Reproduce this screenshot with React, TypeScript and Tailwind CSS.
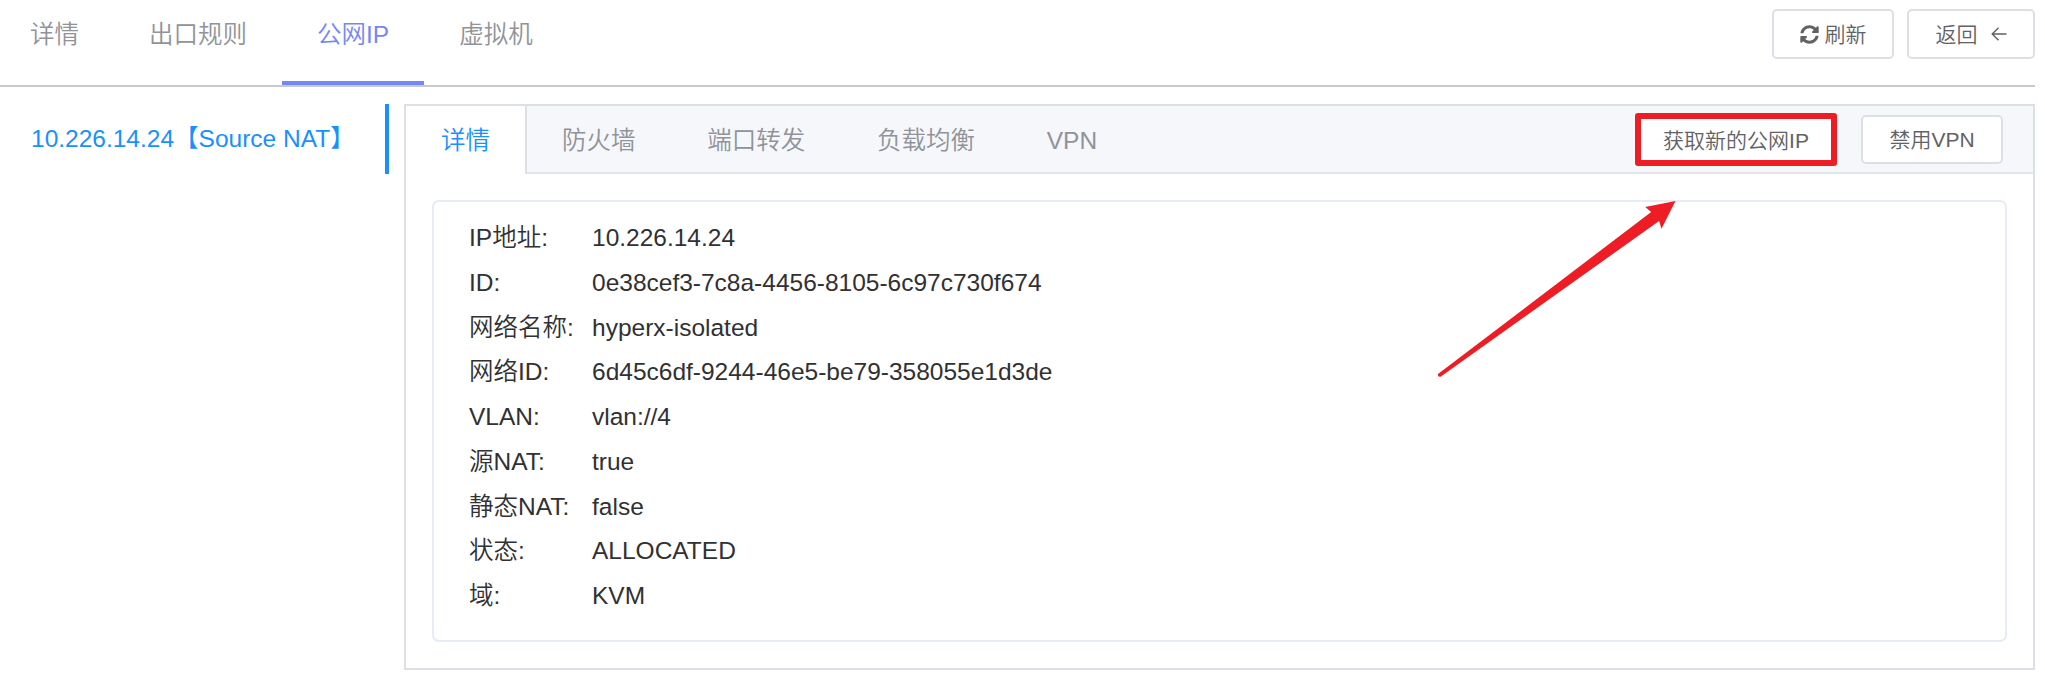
import React from "react";
import { FaSyncAlt } from "react-icons/fa";

const topTabs = [
  { label: "详情", active: false },
  { label: "出口规则", active: false },
  { label: "公网IP", active: true },
  { label: "虚拟机", active: false },
];

const cardTabs = ["防火墙", "端口转发", "负载均衡", "VPN"];

const rows: [string, string][] = [
  ["IP地址:", "10.226.14.24"],
  ["ID:", "0e38cef3-7c8a-4456-8105-6c97c730f674"],
  ["网络名称:", "hyperx-isolated"],
  ["网络ID:", "6d45c6df-9244-46e5-be79-358055e1d3de"],
  ["VLAN:", "vlan://4"],
  ["源NAT:", "true"],
  ["静态NAT:", "false"],
  ["状态:", "ALLOCATED"],
  ["域:", "KVM"],
];

function Button({ className, children }: { className: string; children: React.ReactNode }) {
  return (
    <button
      className={`flex items-center justify-center whitespace-nowrap rounded-[5px] border-2 border-[#dcdfe6] bg-white text-[21px] leading-none text-[#606266] ${className}`}
    >
      {children}
    </button>
  );
}

function BackArrow() {
  return (
    <svg width="16" height="14" viewBox="0 0 16 14" fill="none" stroke="#606266" strokeWidth="1.4" className="ml-[13px]">
      <path d="M15.5 7H1M7.5 0.7L1.2 7L7.5 13.3" />
    </svg>
  );
}

export default function App() {
  return (
    <div className="relative h-[679px] w-[2045px] overflow-hidden bg-white pr-[10px] font-['Liberation_Sans','Noto_Sans_CJK_SC',sans-serif] text-[24.5px] font-[350]">
      <header className="flex h-[87px] items-start justify-between border-b-2 border-[#c8c9cc]">
        <nav className="flex h-[85px] pl-[30px]">
          {topTabs.map((tab, i) => (
            <div
              key={tab.label}
              className={`h-[85px] whitespace-nowrap border-b-4 leading-[70px] ${i === 0 ? "pr-[35px]" : "px-[35px]"} ${
                tab.active ? "border-[#7388f5] text-[#7388f5]" : "border-transparent text-[#909399]"
              }`}
            >
              {tab.label}
            </div>
          ))}
        </nav>
        <div className="flex gap-[13px] pt-[9px]">
          <Button className="h-[50px] w-[122px]">
            <FaSyncAlt className="mr-[6px] size-[19px]" />
            <span>刷新</span>
          </Button>
          <Button className="h-[50px] w-[128px]">
            <span>返回</span>
            <BackArrow />
          </Button>
        </div>
      </header>

      <main className="flex items-start pt-[17px]">
        <aside className="mr-[15px] h-[70px] w-[389px] shrink-0 whitespace-nowrap border-r-4 border-[#1890ff] pl-[31px] leading-[69px] text-[#1890ff]">
          10.226.14.24【Source NAT】
        </aside>

        <section className="h-[566px] grow border-2 border-[#dcdfe6]">
          <div className="flex h-[68px] justify-between">
            <div className="h-[68px] w-[121px] shrink-0 border-r-2 border-[#dcdfe6] pl-[35px] leading-[70px] text-[#1890ff]">
              详情
            </div>
            <div className="flex grow items-start justify-between border-b-2 border-[#dfe4ed] bg-[#f5f7fa] pr-[30px]">
              <div className="flex gap-[71.75px] pl-[35px] leading-[70px] text-[#909399]">
                {cardTabs.map((label) => (
                  <span key={label} className="whitespace-nowrap">
                    {label}
                  </span>
                ))}
              </div>
              <div className="flex items-start gap-[24px] pt-[7px]">
                <div className="h-[53px] w-[202px] rounded-[3px] border-[6px] border-[#ee1c24] bg-white text-center text-[21px] leading-[43px] text-[#606266]">
                  获取新的公网IP
                </div>
                <Button className="mt-[2px] h-[49px] w-[142px]">
                  <span>禁用VPN</span>
                </Button>
              </div>
            </div>
          </div>

          <div className="mx-[26px] mt-[26px] h-[442px] rounded-[7px] border-2 border-[#e6ebf5] pl-[35px] pt-[14px] text-[#303133]">
            {rows.map(([label, value]) => (
              <div key={label} className="flex h-[44.75px] whitespace-nowrap leading-[44.75px]">
                <span className="w-[123px]">{label}</span>
                <span>{value}</span>
              </div>
            ))}
          </div>
        </section>
      </main>

      <svg className="absolute left-[1437px] top-[200px]" width="240" height="178" viewBox="1437 200 240 178">
        <path
          d="M1675.5 201L1645.2 207L1651.2 212L1438 374Q1437.4 377.4 1440.5 376.7L1659.1 221L1661.5 228.7Z"
          fill="#ee1c24"
        />
      </svg>
    </div>
  );
}
